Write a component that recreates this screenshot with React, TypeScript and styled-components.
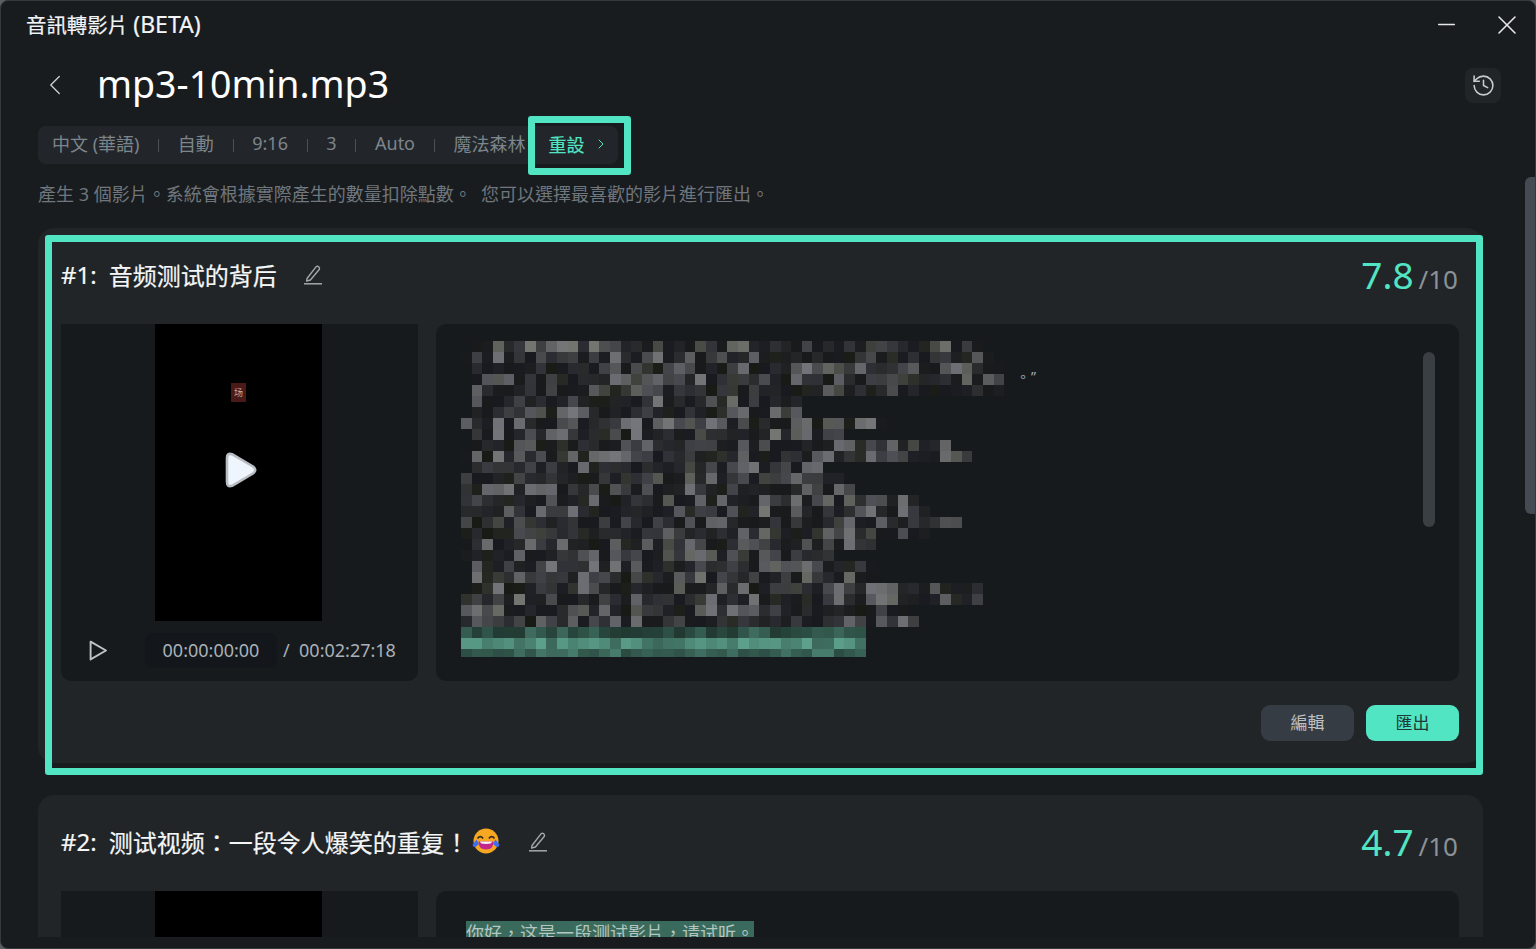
import { ChevronLeft, ChevronRight, History, Minus, X } from "lucide-react";
import styled, { createGlobalStyle } from "styled-components";

const TEAL = "#52e5c4";

const GlobalStyle = createGlobalStyle`
  html, body {
    margin: 0;
    padding: 0;
    background: #5a5f63;
    overflow: hidden;
  }
  * {
    box-sizing: border-box;
  }
`;

const Window = styled.div`
  width: 1536px;
  height: 949px;
  display: flex;
  flex-direction: column;
  position: relative;
  overflow: hidden;
  background: #191c1f;
  border: 1px solid #34393e;
  border-radius: 8px;
  font-family: "Noto Sans", "Noto Sans CJK TC", sans-serif;
  color: #fff;
`;

const TitleBar = styled.div`
  flex: none;
  height: 49px;
  display: flex;
  align-items: center;
  justify-content: space-between;
  padding: 0 12px 0 25px;
`;

const WindowTitle = styled.div`
  padding-bottom: 3px;
  font-size: 20.4px;
  color: #f2f4f5;
  -webkit-text-stroke: 0.2px #f2f4f5;
`;

const BetaMark = styled.span`
  font-size: 23px;
`;

const WindowActions = styled.div`
  display: flex;
  align-items: center;
  gap: 31px;
  padding-bottom: 2px;
  color: #e4e6e8;
`;

const Scroller = styled.div`
  flex: 1;
  min-height: 0;
  margin-bottom: 11px;
  padding: 0 52px 0 37px;
  overflow: hidden;
`;

const ScrollThumb = styled.div`
  position: absolute;
  top: 176px;
  right: 0;
  width: 10px;
  height: 337px;
  background: #454b52;
  border-radius: 6px 0 0 6px;
`;

const HeaderRow = styled.div`
  height: 50px;
  margin-top: 10px;
  display: flex;
  align-items: center;
  margin-right: -18px;
`;

const BackButton = styled.div`
  width: 59px;
  display: flex;
  justify-content: flex-start;
  color: #c4c8cb;
`;

const FileName = styled.h1`
  flex: 1;
  margin: 0;
  padding-bottom: 4px;
  font-size: 37.5px;
  font-weight: 400;
  color: #fff;
`;

const HistoryButton = styled.div`
  width: 36px;
  height: 35px;
  display: flex;
  align-items: center;
  justify-content: center;
  background: #212528;
  border-radius: 8px;
  color: #c8cbce;
`;

const TagBar = styled.div`
  position: relative;
  width: 580px;
  height: 38px;
  margin-top: 16px;
  padding-left: 14px;
  display: flex;
  align-items: center;
  background: #22262a;
  border-radius: 8px;
`;

const Tag = styled.span`
  padding-bottom: 4px;
  font-size: 18px;
  color: #7d858c;
  white-space: nowrap;
`;

const TagDivider = styled.span`
  width: 1px;
  height: 13px;
  margin: 0 18.7px;
  background: #4a5056;
`;

const ResetLink = styled.span`
  display: flex;
  align-items: center;
  gap: 9px;
  margin-left: 23px;
  padding-bottom: 3px;
  font-size: 18px;
  color: ${TEAL};
  white-space: nowrap;
  -webkit-text-stroke: 0.2px ${TEAL};
`;

const Highlight = styled.div<{ $top: number; $left: number; $right: number; $bottom: number }>`
  position: absolute;
  top: ${(p) => p.$top}px;
  left: ${(p) => p.$left}px;
  right: ${(p) => p.$right}px;
  bottom: ${(p) => p.$bottom}px;
  border: 7px solid ${TEAL};
  border-radius: 3px;
  pointer-events: none;
`;

const Description = styled.p`
  margin: 17px 0 21px;
  font-size: 18px;
  line-height: 26px;
  color: #6f767c;
  white-space: pre;
`;

const Card = styled.section`
  position: relative;
  margin-bottom: 32px;
  padding: 0 24px 22px 23px;
  background: #212528;
  border-radius: 16px;
`;

const CardHeader = styled.div`
  height: 96px;
  display: flex;
  align-items: center;
  justify-content: space-between;
`;

const CardTitle = styled.div`
  display: flex;
  align-items: center;
  padding-bottom: 4px;
  font-size: 24px;
  color: #f4f6f7;
  -webkit-text-stroke: 0.2px #f4f6f7;
`;

const CardNo = styled.span`
  margin-right: 12px;
`;

const EditPencil = styled.svg`
  margin-left: 26px;
  color: #a4a8ac;
`;

const Score = styled.div`
  display: flex;
  align-items: baseline;
  gap: 5px;
  margin-right: 1px;
  padding-bottom: 3px;
`;

const ScoreValue = styled.span`
  font-size: 37px;
  color: ${TEAL};
`;

const ScoreMax = styled.span`
  font-size: 26px;
  color: #8b9196;
`;

const CardBody = styled.div`
  display: grid;
  grid-template-columns: 357px 1fr;
  gap: 18px;
  height: 357px;
`;

const PlayerPanel = styled.div`
  display: flex;
  flex-direction: column;
  background: #171a1d;
  border-radius: 0 0 10px 10px;
`;

const VideoFrame = styled.div`
  position: relative;
  flex: none;
  width: 167px;
  height: 297px;
  margin: 0 auto 0 94px;
  display: flex;
  align-items: center;
  justify-content: center;
  background: #000;
`;

const ThumbChip = styled.span`
  position: absolute;
  top: 59px;
  left: 76px;
  width: 15px;
  height: 19px;
  display: flex;
  align-items: center;
  justify-content: center;
  background: #4a1a18;
  color: #c9a9a4;
  font-size: 9px;
`;

const Controls = styled.div`
  flex: 1;
  display: flex;
  align-items: center;
  padding: 0 0 1px 28px;
  font-size: 18px;
  color: #a9b1b8;
`;

const TimeBox = styled.span`
  width: 132px;
  height: 35px;
  margin-left: 37px;
  padding-bottom: 1px;
  display: flex;
  align-items: center;
  justify-content: center;
  background: #13161a;
  border-radius: 8px;
`;

const TimeTotal = styled.span`
  margin-left: 6px;
  padding-bottom: 2px;
  white-space: pre;
`;

const TextPanel = styled.div`
  position: relative;
  padding: 17px 25px;
  background: #171a1d;
  border-radius: 10px;
`;

const MosaicWrap = styled.div`
  position: relative;
  width: 590px;
`;

const TrailingQuote = styled.span`
  position: absolute;
  top: 26px;
  left: 555px;
  font-size: 14px;
  line-height: 20px;
  letter-spacing: 1px;
  color: #a3abb3;
  white-space: pre;
`;

const Selected = styled.span`
  display: inline-block;
  margin: 13px 0 0 5px;
  background: #3a6a5c;
  color: #b4c6c0;
  font-size: 18px;
  line-height: 24px;
  white-space: nowrap;
`;

const TextScroll = styled.div`
  position: absolute;
  top: 28px;
  right: 24px;
  width: 12px;
  height: 175px;
  background: #3a3f44;
  border-radius: 6px;
`;

const CardFooter = styled.div`
  margin-top: 24px;
  display: flex;
  justify-content: flex-end;
  gap: 12px;
`;

const FooterButton = styled.button<{ $primary?: boolean }>`
  width: 93px;
  height: 36px;
  padding: 0 0 4px;
  border: 0;
  border-radius: 9px;
  font-family: inherit;
  font-size: 17px;
  background: ${(p) => (p.$primary ? TEAL : "#363c43")};
  color: ${(p) => (p.$primary ? "#1c3a36" : "#bcc0c4")};
`;

// rows of the blurred transcript: first and last cell of each row
const ROWS: [number, number][] = [
  [1, 48], [0, 49], [1, 50], [1, 50], [1, 50], [1, 31], [1, 31], [0, 39], [1, 35], [1, 45],
  [0, 47], [1, 33], [0, 35], [0, 36], [0, 42], [0, 43], [0, 46], [0, 43], [1, 38], [0, 34],
  [1, 38], [1, 37], [1, 48], [0, 48], [0, 41], [0, 42], [0, 37], [0, 37], [0, 37],
];
const CELL_W = 10.65;
const CELL_H = 11;

let seed = 73;
const rand = () => {
  seed = (seed * 16807) % 2147483647;
  return seed / 2147483647;
};

const CELLS = ROWS.flatMap(([from, to], row) => {
  const cells: { x: number; y: number; fill: string }[] = [];
  for (let col = from; col <= to; col++) {
    const r = rand();
    const tint = rand();
    let fill: string;
    if (row >= 26) {
      const base = row === 26 ? 52 + r * 50 : row === 27 ? 96 + r * 55 : 70 + r * 45;
      fill = `rgb(${Math.round(base * 0.62)},${Math.round(base * 1.08)},${Math.round(base * 0.94)})`;
    } else {
      const v = Math.round(24 + Math.pow(r, 2.2) * 92);
      const blue = tint > 0.85 ? -2 : tint > 0.4 ? 4 : 8;
      fill = `rgb(${v},${v + 2},${v + blue})`;
    }
    cells.push({ x: col * CELL_W, y: row * CELL_H, fill });
  }
  return cells;
});

function Mosaic() {
  return (
    <svg width="562" height="316" viewBox="0 0 562 316" shapeRendering="crispEdges" style={{ display: "block" }}>
      {CELLS.map((c) => (
        <rect key={`${c.x}-${c.y}`} x={c.x} y={c.y} width={CELL_W} height={CELL_H} fill={c.fill} />
      ))}
    </svg>
  );
}

function Pencil() {
  return (
    <EditPencil width="20" height="22" viewBox="0 0 20 22" fill="none" stroke="currentColor">
      <path d="M4 15.5 L13.2 3.6 a2.2 2.2 0 0 1 3.2 2.6 L7.4 17 L3.6 18 Z" strokeWidth="1.4" strokeLinejoin="round" />
      <path d="M1 20.8 H19" strokeWidth="1.5" />
    </EditPencil>
  );
}

function LaughEmoji() {
  return (
    <svg width="28" height="28" viewBox="0 0 28 28" style={{ marginLeft: 3, marginRight: 2 }}>
      <circle cx="14" cy="14" r="12.5" fill="#f7a823" />
      <path d="M5.5 11.5 q2.8 -3.6 5.6 0 M16.9 11.5 q2.8 -3.6 5.6 0" fill="none" stroke="#3a2a20" strokeWidth="1.7" />
      <path d="M6.5 14.5 H21.5 Q21.5 22.5 14 22.5 Q6.5 22.5 6.5 14.5 Z" fill="#c2288c" />
      <path d="M8 14.5 H20 Q20 17 14 17 Q8 17 8 14.5 Z" fill="#f4f4f4" />
      <path d="M4.6 12.4 L0.6 17.6 Q0.6 20.6 3.4 20 L7 17 Z" fill="#3d6df0" />
      <path d="M23.4 12.4 L27.4 17.6 Q27.4 20.6 24.6 20 L21 17 Z" fill="#3d6df0" />
    </svg>
  );
}

function BigPlay() {
  return (
    <svg width="34" height="38" viewBox="0 0 34 38" style={{ marginLeft: 5, marginTop: -5 }}>
      <path
        d="M3 7 Q3 1.6 8 3.2 L29 15.5 Q33.5 19 29 22.5 L8 34.8 Q3 36.4 3 31 Z"
        fill="#eef5fd"
        stroke="#b9bec4"
        strokeWidth="2.6"
        strokeLinejoin="round"
      />
    </svg>
  );
}

function SmallPlay() {
  return (
    <svg width="19" height="21" viewBox="0 0 19 21" fill="none">
      <path d="M1.6 1.6 L17 10.5 L1.6 19.4 Z" stroke="#bfc3c7" strokeWidth="1.9" strokeLinejoin="round" />
    </svg>
  );
}

interface CardInfo {
  no: string;
  title: string;
  score: string;
  emoji?: boolean;
  picked?: boolean;
}

const CARDS: CardInfo[] = [
  { no: "#1:", title: "音频测试的背后", score: "7.8", picked: true },
  { no: "#2:", title: "测试视频\uFF1A一段令人爆笑的重复\uFF01", score: "4.7", emoji: true },
];

function VideoCard({ info }: { info: CardInfo }) {
  return (
    <Card>
      <CardHeader>
        <CardTitle>
          <CardNo>{info.no}</CardNo>
          {info.title}
          {info.emoji && <LaughEmoji />}
          <Pencil />
        </CardTitle>
        <Score>
          <ScoreValue>{info.score}</ScoreValue>
          <ScoreMax>/10</ScoreMax>
        </Score>
      </CardHeader>
      <CardBody>
        <PlayerPanel>
          <VideoFrame>
            {info.picked && <ThumbChip>场</ThumbChip>}
            {info.picked && <BigPlay />}
          </VideoFrame>
          {info.picked && (
            <Controls>
              <SmallPlay />
              <TimeBox>00:00:00:00</TimeBox>
              <TimeTotal>{"/  00:02:27:18"}</TimeTotal>
            </Controls>
          )}
        </PlayerPanel>
        <TextPanel>
          {info.picked ? (
            <>
              <MosaicWrap>
                <Mosaic />
                <TrailingQuote>。”</TrailingQuote>
              </MosaicWrap>
              <TextScroll />
            </>
          ) : (
            <Selected>{"你好\uFF0C这是一段测试影片\uFF0C请试听。"}</Selected>
          )}
        </TextPanel>
      </CardBody>
      {info.picked && (
        <CardFooter>
          <FooterButton>編輯</FooterButton>
          <FooterButton $primary>匯出</FooterButton>
        </CardFooter>
      )}
      {info.picked && <Highlight $top={7} $left={7} $right={0} $bottom={-12} />}
    </Card>
  );
}

export default function App() {
  return (
    <>
      <GlobalStyle />
      <Window>
        <TitleBar>
          <WindowTitle>
            音訊轉影片 <BetaMark>(BETA)</BetaMark>
          </WindowTitle>
          <WindowActions>
            <Minus size={27} strokeWidth={1.2} />
            <X size={32} strokeWidth={1.2} />
          </WindowActions>
        </TitleBar>
        <Scroller>
          <HeaderRow>
            <BackButton>
              <ChevronLeft size={34} strokeWidth={1} />
            </BackButton>
            <FileName>mp3-10min.mp3</FileName>
            <HistoryButton>
              <History size={25} strokeWidth={1.5} />
            </HistoryButton>
          </HeaderRow>
          <TagBar>
            <Tag>中文 (華語)</Tag>
            <TagDivider />
            <Tag>自動</Tag>
            <TagDivider />
            <Tag>9:16</Tag>
            <TagDivider />
            <Tag>3</Tag>
            <TagDivider />
            <Tag>Auto</Tag>
            <TagDivider />
            <Tag>魔法森林</Tag>
            <ResetLink>
              重設
              <ChevronRight size={16} strokeWidth={1.5} />
            </ResetLink>
            <Highlight $top={-10} $left={490} $right={-13} $bottom={-11} />
          </TagBar>
          <Description>{"產生 3 個影片。系統會根據實際產生的數量扣除點數。  您可以選擇最喜歡的影片進行匯出。"}</Description>
          {CARDS.map((c) => (
            <VideoCard key={c.no} info={c} />
          ))}
        </Scroller>
        <ScrollThumb />
      </Window>
    </>
  );
}
